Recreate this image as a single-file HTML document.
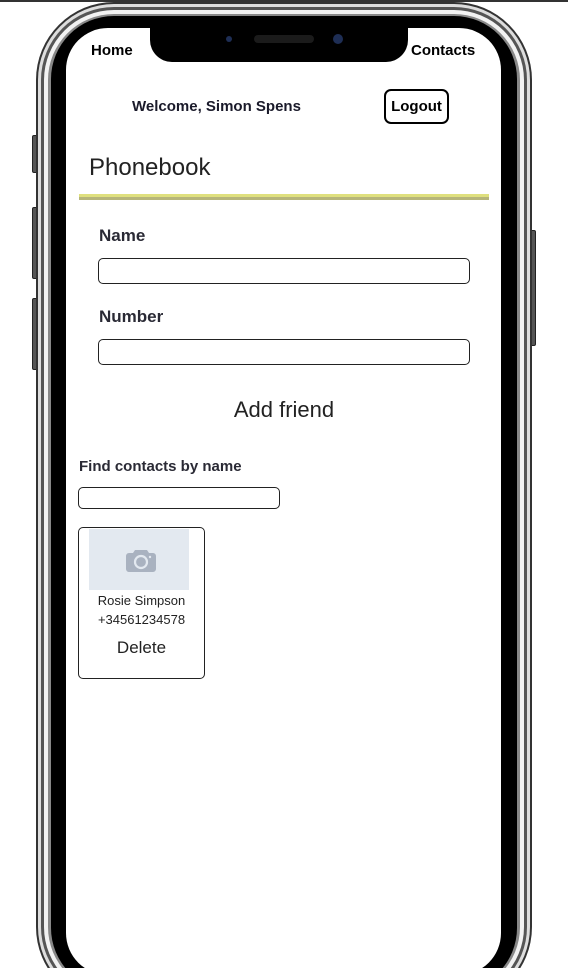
<!DOCTYPE html>
<html style="overflow:hidden"><head><meta charset="utf-8"><style>
*{margin:0;padding:0;box-sizing:border-box}
html,body{width:568px;height:968px;overflow:hidden}
body{background:#fff;position:relative;font-family:"Liberation Sans",sans-serif;color:#222}
#w{position:absolute;left:0;top:0;width:568px;height:968px;overflow:hidden}
.a{position:absolute}
.btn{background:#555;border:1px solid #222;border-radius:2px}
input{position:absolute;border:1px solid #222;border-radius:5px;background:#fff}
</style></head><body><div id="w">
<div class="a" style="left:0;top:0;width:568px;height:2px;background:#333"></div>
<div class="a btn" style="left:32px;top:135px;width:6px;height:38px"></div>
<div class="a btn" style="left:32px;top:207px;width:6px;height:72px"></div>
<div class="a btn" style="left:32px;top:298px;width:6px;height:72px"></div>
<div class="a btn" style="left:530px;top:230px;width:6px;height:116px"></div>
<div class="a" style="left:36px;top:2px;width:496px;height:1003px;border-radius:78px;background:#333"></div>
<div class="a" style="left:38px;top:4px;width:492px;height:999px;border-radius:76px;background:#ddd"></div>
<div class="a" style="left:41px;top:7px;width:486px;height:993px;border-radius:73px;background:#555"></div>
<div class="a" style="left:44px;top:10px;width:480px;height:987px;border-radius:70px;background:#f2f2f2"></div>
<div class="a" style="left:48px;top:14px;width:472px;height:979px;border-radius:66px;background:#888"></div>
<div class="a" style="left:51px;top:16px;width:466px;height:975px;border-radius:63px;background:#000"></div>
<div class="a" style="left:66px;top:28px;width:435px;height:947px;border-radius:42px;background:#fff"></div>
<div class="a" style="left:150px;top:26px;width:258px;height:36px;background:#000;border-radius:0 0 22px 22px"></div>
<div class="a" style="left:226px;top:36px;width:6px;height:6px;border-radius:50%;background:#1e2e55"></div>
<div class="a" style="left:254px;top:35px;width:60px;height:8px;border-radius:4px;background:#1b1b1b"></div>
<div class="a" style="left:333px;top:34px;width:10px;height:10px;border-radius:50%;background:#1e2e55"></div>

<div class="a" style="left:91px;top:42px;font-size:15px;font-weight:bold;color:#000">Home</div>
<div class="a" style="left:411px;top:42px;font-size:15px;font-weight:bold;color:#000">Contacts</div>
<div class="a" style="left:132px;top:98px;font-size:15px;font-weight:bold;color:#1a1a2a">Welcome, Simon Spens</div>
<div class="a" style="left:384px;top:89px;width:65px;height:35px;border:2px solid #000;border-radius:7px;font-size:15px;font-weight:bold;text-align:center;line-height:31px;color:#000">Logout</div>
<div class="a" style="left:89px;top:154px;font-size:24px;color:#222">Phonebook</div>
<div class="a" style="left:79px;top:194px;width:410px;height:3px;background:#dfe07e"></div>
<div class="a" style="left:79px;top:197px;width:410px;height:3px;background:#b6b57a"></div>
<div class="a" style="left:99px;top:226px;font-size:17px;font-weight:bold;color:#2a2a35">Name</div>
<input style="left:98px;top:258px;width:372px;height:26px">
<div class="a" style="left:99px;top:307px;font-size:17px;font-weight:bold;color:#2a2a35">Number</div>
<input style="left:98px;top:339px;width:372px;height:26px">
<div class="a" style="left:0;width:568px;top:397px;text-align:center;font-size:22px;color:#222">Add friend</div>
<div class="a" style="left:79px;top:458px;font-size:15px;font-weight:bold;color:#2a2a35">Find contacts by name</div>
<input style="left:78px;top:487px;width:202px;height:22px">
<div class="a" style="left:78px;top:527px;width:127px;height:152px;border:1px solid #222;border-radius:5px"></div>
<div class="a" style="left:89px;top:529px;width:100px;height:61px;background:#e3e9f0"></div>
<svg class="a" style="left:125px;top:547px" width="32" height="26" viewBox="0 0 32 26"><path d="M10 3h12l2 3h4a3 3 0 0 1 3 3v13a3 3 0 0 1-3 3H4a3 3 0 0 1-3-3V9a3 3 0 0 1 3-3h4z" fill="#a9b2c0"/><circle cx="16" cy="15" r="6" fill="none" stroke="#e3e9f0" stroke-width="2.2"/><circle cx="25" cy="10" r="1.2" fill="#e3e9f0"/></svg>
<div class="a" style="left:78px;width:127px;top:593px;text-align:center;font-size:13px;color:#222">Rosie Simpson</div>
<div class="a" style="left:78px;width:127px;top:612px;text-align:center;font-size:13px;color:#222">+34561234578</div>
<div class="a" style="left:78px;width:127px;top:638px;text-align:center;font-size:17px;color:#222">Delete</div>
</div></body></html>
